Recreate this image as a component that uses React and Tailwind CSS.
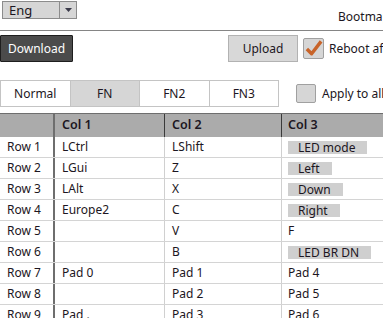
import React from 'react';

const ROWS = [
  { name: 'Row 1', c1: 'LCtrl', c2: 'LShift', c3: 'LED mode', tag: true },
  { name: 'Row 2', c1: 'LGui', c2: 'Z', c3: 'Left', tag: true },
  { name: 'Row 3', c1: 'LAlt', c2: 'X', c3: 'Down', tag: true },
  { name: 'Row 4', c1: 'Europe2', c2: 'C', c3: 'Right', tag: true },
  { name: 'Row 5', c1: '', c2: 'V', c3: 'F' },
  { name: 'Row 6', c1: '', c2: 'B', c3: 'LED BR DN', tag: true },
  { name: 'Row 7', c1: 'Pad 0', c2: 'Pad 1', c3: 'Pad 4' },
  { name: 'Row 8', c1: '', c2: 'Pad 2', c3: 'Pad 5' },
  { name: 'Row 9', c1: 'Pad .', c2: 'Pad 3', c3: 'Pad 6' },
];

const TABS = ['Normal', 'FN', 'FN2', 'FN3'];

function CheckBox({ checked, className }) {
  return (
    <div className={`shrink-0 bg-[#d6d6d6] border border-[#a0a0a0] rounded-[2px] relative ${className}`}>
      {checked && (
        <svg viewBox="0 0 20 20" className="absolute inset-0 w-full h-full">
          <path d="M3 10.5 L8 15.5 L18 2.5" fill="none" stroke="#c8642a" strokeWidth="3.6" strokeLinejoin="round" />
        </svg>
      )}
    </div>
  );
}

export default function App() {
  return (
    <div
      className="w-[383px] h-[318px] overflow-hidden bg-white text-[12px] text-[#1c1622]"
      style={{ fontFamily: '"Noto Sans", "Open Sans", sans-serif' }}
    >
      {/* language + title */}
      <div className="h-[30px] flex items-start overflow-hidden">
        <div className="shrink-0 ml-[2px] mt-[1px] w-[75px] h-[18px] flex bg-[#d6d6d6] border border-[#8c8c8c]">
          <span className="flex-1 pl-[6px] leading-[16px] text-[13px]">Eng</span>
          <span className="w-[17px] border-l border-[#8c8c8c] flex items-center justify-center">
            <svg width="7" height="4" viewBox="0 0 7 4">
              <path d="M0 0 H7 L3.5 4 Z" fill="#3a3a4a" />
            </svg>
          </span>
        </div>
        <span className="shrink-0 ml-[261px] mt-[8px] whitespace-nowrap">Bootmapper</span>
      </div>
      <div className="h-px bg-[#858585]" />

      {/* download / upload */}
      <div className="mt-[4px] h-[27px] flex items-center overflow-hidden">
        <button className="shrink-0 w-[73px] h-[27px] bg-[#4b4b4b] border border-[#1e1e1e] text-white rounded-[1px]">
          Download
        </button>
        <button className="shrink-0 ml-[155px] w-[70px] h-[27px] bg-[#d8d8d8] border border-[#b2b2b2]">
          Upload
        </button>
        <CheckBox checked className="ml-[5px] w-[21px] h-[21px]" />
        <span className="shrink-0 ml-[5px] whitespace-nowrap">Reboot after upload</span>
      </div>

      {/* layer tabs */}
      <div className="mt-[18px] h-[27px] flex items-center overflow-hidden">
        <div className="shrink-0 flex w-[279px] h-[27px] border border-[#c4c4c4]">
          {TABS.map((t, i) => (
            <div
              key={t}
              className={`flex-1 flex items-center justify-center ${i > 0 ? 'border-l border-[#c4c4c4]' : ''} ${
                t === 'FN' ? 'bg-[#d6d6d6]' : 'bg-white'
              }`}
            >
              {t}
            </div>
          ))}
        </div>
        <CheckBox className="ml-[17px] w-[20px] h-[19px]" />
        <span className="shrink-0 ml-[6px] whitespace-nowrap">Apply to all layers</span>
      </div>

      {/* matrix */}
      <div className="mt-[6px]">
        <div className="flex h-[24px] bg-[#ababab] border-t border-[#6e6e6e] font-semibold text-[12.5px]">
          <div className="shrink-0 w-[53px]" />
          <div className="shrink-0 w-[111px] border-l-2 border-[#6e6e6e] pl-[7px] leading-[22px]">Col 1</div>
          <div className="shrink-0 w-[117px] border-l border-[#3a3a3a] pl-[7px] leading-[22px]">Col 2</div>
          <div className="flex-1 border-l border-[#3a3a3a] pl-[6px] leading-[22px] whitespace-nowrap">Col 3</div>
        </div>
        {ROWS.map((r) => (
          <div key={r.name} className="flex h-[21px] border-b border-[#d4d4d4]">
            <div className="shrink-0 w-[53px] pl-[7px] leading-[20px]">{r.name}</div>
            <div className="shrink-0 w-[111px] border-l-2 border-[#6e6e6e] pl-[7px] leading-[20px]">{r.c1}</div>
            <div className="shrink-0 w-[117px] border-l border-[#d0d0d0] pl-[7px] leading-[20px]">{r.c2}</div>
            <div className="flex-1 border-l border-[#d0d0d0] pl-[6px] flex items-center whitespace-nowrap">
              {r.tag ? (
                <span className="bg-[#cfcfcf] pl-[10px] pr-[12px] h-[13px] leading-[13px]">{r.c3}</span>
              ) : (
                <span className="leading-[20px]">{r.c3}</span>
              )}
            </div>
          </div>
        ))}
      </div>
    </div>
  );
}
